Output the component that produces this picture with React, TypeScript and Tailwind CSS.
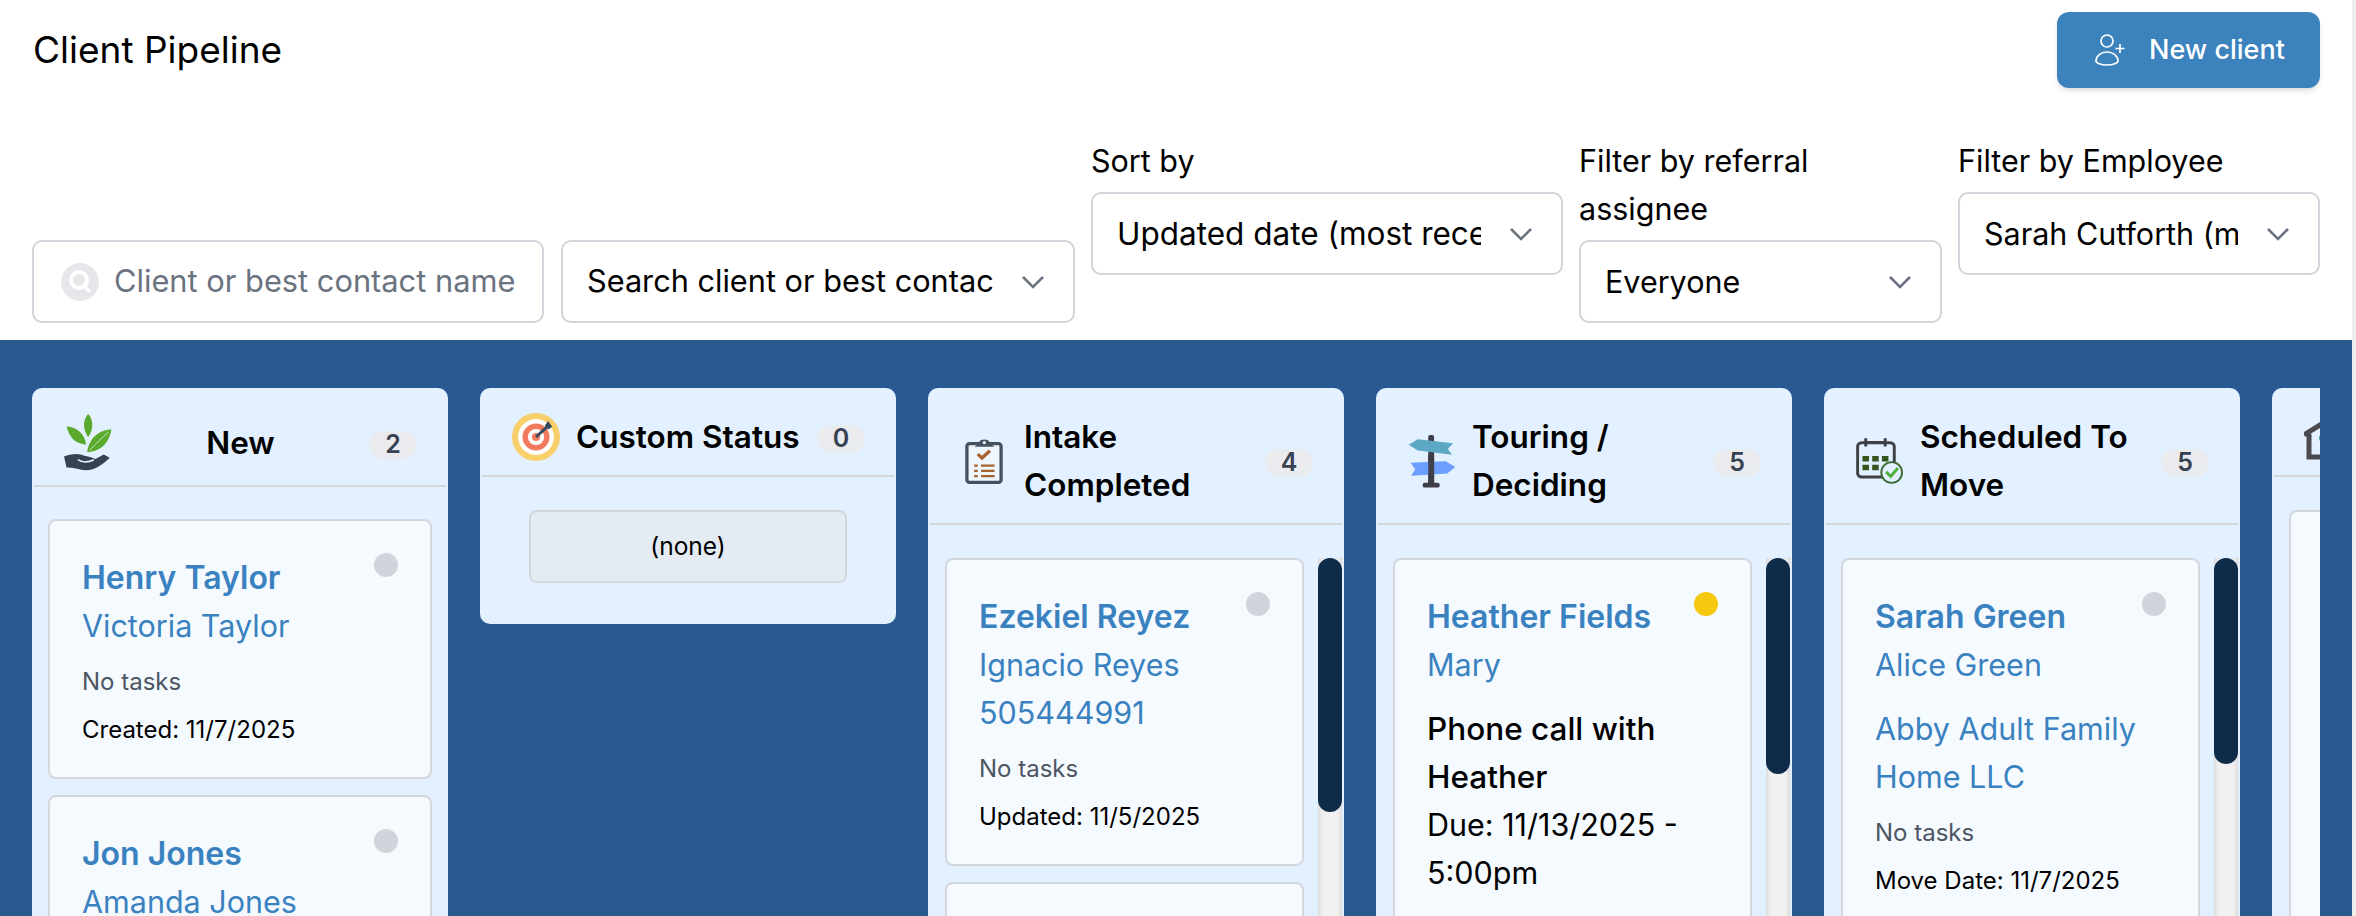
import React from "react";

function Chevron() {
  return (
    <svg viewBox="0 0 24 14" className="w-[24px] h-[14px] shrink-0" fill="none" stroke="#6b7280" strokeWidth="2.6">
      <path d="M2 2l10 10L22 2" />
    </svg>
  );
}

function Select({ text, w, size = "text-[30.5px]" }: { text: string; w: string; size?: string }) {
  return (
    <div className={`${w} h-[83px] flex items-center bg-white border-2 border-[#d1d5db] rounded-[10px] pl-[24px] pr-[28px] gap-[28px]`}>
      <div className={`flex-1 overflow-hidden whitespace-nowrap ${size} text-black`}>{text}</div>
      <Chevron />
    </div>
  );
}

function PlantIcon() {
  return (
    <svg viewBox="70 50 145 172" className="w-[48px] h-[57px] shrink-0">
      <path d="M143 50C128 65 125 95 143 120C161 95 158 65 143 50Z" fill="#5aab2d" />
      <path d="M78 88C110 90 132 110 137 142C105 142 85 120 78 88Z" fill="#5aab2d" />
      <path d="M213 97C175 97 145 125 140 165C180 165 208 135 213 97Z" fill="#5aab2d" />
      <path d="M148 160C165 140 185 122 205 104" stroke="#c8e6b5" strokeWidth="3" fill="none" />
      <path d="M70 178C85 172 105 168 120 172C135 178 150 178 165 186L190 172L208 182C190 200 165 220 135 220C115 220 100 210 78 212Z" fill="#374151" />
      <path d="M112 188C125 198 145 196 160 188" stroke="#e2f0ff" strokeWidth="5" fill="none" />
    </svg>
  );
}

function TargetIcon() {
  return (
    <svg viewBox="49 51 142 142" className="w-[48px] h-[48px] shrink-0">
      <circle cx="120" cy="122" r="71" fill="#f9cf6c" />
      <circle cx="120" cy="122" r="53" fill="#ffffff" />
      <circle cx="120" cy="122" r="40" fill="#f17a5e" />
      <circle cx="120" cy="122" r="24" fill="#ffffff" />
      <circle cx="120" cy="122" r="12" fill="#f17a5e" />
      <path d="M120 122L155 90" stroke="#34495e" strokeWidth="9" />
      <path d="M146 88L156 75L168 92L156 100Z" fill="#34495e" />
    </svg>
  );
}

function ClipboardIcon() {
  return (
    <svg viewBox="41 46 146 146" className="w-[48px] h-[48px] shrink-0">
      <rect x="62" y="66" width="104" height="118" rx="8" fill="#eef5fc" stroke="#44515f" strokeWidth="10" />
      <path d="M86 76L98 64C100 50 130 50 132 64L146 76Z" fill="#44515f" />
      <circle cx="115" cy="63" r="5" fill="#eef5fc" />
      <path d="M95 98L108 110L132 88" fill="none" stroke="#a5622f" strokeWidth="10" />
      <path d="M84 133H95M105 133H146M84 149H95M105 149H146M84 165H95M105 165H146" stroke="#a5622f" strokeWidth="7" />
    </svg>
  );
}

function SignIcon() {
  return (
    <svg viewBox="50 38 147 163" className="w-[48px] h-[54px] shrink-0">
      <rect x="112" y="40" width="18" height="150" rx="6" fill="#3d3d45" />
      <rect x="95" y="186" width="52" height="15" rx="6" fill="#3d3d45" />
      <path d="M52 70L80 53L188 65L172 83L185 100L80 87Z" fill="#5ba9c4" />
      <path d="M58 125L165 120L195 138L170 158L60 165L72 145Z" fill="#6b9eff" />
      <rect x="112" y="100" width="18" height="90" fill="#3d3d45" opacity="0.95" />
    </svg>
  );
}

function CalendarIcon() {
  return (
    <svg viewBox="45 48 148 145" className="w-[48px] h-[48px] shrink-0">
      <rect x="50" y="64" width="113" height="106" rx="12" fill="none" stroke="#3f3f46" strokeWidth="9" />
      <path d="M75 50V76M135 50V76M78 63H132" stroke="#3f3f46" strokeWidth="9" />
      <path d="M65 105H85V122H65ZM95 105H115V122H95ZM125 105H145V122H125ZM65 132H85V149H65ZM95 132H115V149H95Z" fill="#35561f" />
      <circle cx="155" cy="156" r="32" fill="#e2f0ff" stroke="#3d6b35" strokeWidth="6" />
      <path d="M138 154L152 168L174 142" fill="none" stroke="#4caf3a" strokeWidth="9" />
    </svg>
  );
}

function HouseIcon() {
  return (
    <svg viewBox="0 -5 48 48" className="w-[48px] h-[48px] shrink-0" fill="none" stroke="#4b4b4f" strokeWidth="5">
      <path d="M0 17L24 2L48 17" />
      <path d="M5 16V39H20" />
      <circle cx="19" cy="20" r="4" fill="#3fa796" stroke="none" />
    </svg>
  );
}

function Badge({ n, cls = "" }: { n: number; cls?: string }) {
  return (
    <div className={`w-[48px] h-[28px] shrink-0 rounded-full bg-[#e9ebef] flex items-center justify-center text-[25px] font-semibold text-[#374151] ${cls}`}>
      {n}
    </div>
  );
}

function Card({
  name,
  lines,
  task,
  due,
  foot,
  dot = "bg-[#d1d5db]",
  extra,
}: {
  name: string;
  lines: string[];
  task?: string;
  due?: string[];
  foot?: string;
  dot?: string;
  extra?: string[];
}) {
  return (
    <div className="relative shrink-0 bg-[#f5faff] border-2 border-[#d4d7dc] rounded-[8px] px-[32px] pt-[33px] pb-[27px]">
      <div className={`absolute top-[32px] right-[32px] w-[24px] h-[24px] rounded-full ${dot}`} />
      <div className="text-[32px] leading-[48px] font-semibold text-[#3a82bf]">{name}</div>
      {lines.map((l) => (
        <div key={l} className="text-[30.5px] leading-[48px] text-[#3a82bf]">{l}</div>
      ))}
      {extra && (
        <div className="mt-[16px]">
          {extra.map((l) => (
            <div key={l} className="text-[30.5px] leading-[48px] text-[#3a82bf]">{l}</div>
          ))}
        </div>
      )}
      {due && (
        <div className="mt-[16px] text-[30.5px] leading-[48px] text-black">
          <div className="text-[31.5px] font-medium">{due[0]}</div>
          <div className="text-[31.5px] font-medium">{due[1]}</div>
          <div>{due[2]}</div>
          <div>{due[3]}</div>
        </div>
      )}
      {task && <div className="mt-[12px] text-[24px] leading-[40px] text-[#4b5563]">{task}</div>}
      {foot && <div className="mt-[8px] text-[24px] leading-[40px] text-black">{foot}</div>}
    </div>
  );
}

function Column({
  icon,
  title,
  count,
  thumb,
  children,
  center,
}: {
  icon: React.ReactNode;
  title?: React.ReactNode;
  count?: number;
  thumb?: string;
  children: React.ReactNode;
  center?: boolean;
}) {
  return (
    <div className="w-[416px] shrink-0 self-start bg-[#e2f0ff] border-2 border-[#e2f0ff] rounded-[10px] flex flex-col">
      <div className={`flex items-center gap-[16px] pl-[30px] pr-[29px] border-b-2 border-[#d4d7dc] ${center ? "pt-[10px] h-[97px]" : "pt-[23px] pb-[14px]"}`}>
        {icon}
        {title && (
          <div className={`flex-1 whitespace-nowrap text-[31.5px] leading-[48px] font-semibold text-black ${center ? "text-center" : ""}`}>{title}</div>
        )}
        {count !== undefined && <Badge n={count} cls="mt-[4px]" />}
      </div>
      {thumb ? (
        <div className="flex mt-[33px] pl-[15px] gap-[14px] h-[600px]">
          <div className="flex-1 flex flex-col gap-[16px]">{children}</div>
          <div className="w-[24px] bg-[#f1f1f1] shadow-[inset_3px_0_4px_-2px_#cfcfcf,inset_-3px_0_4px_-2px_#cfcfcf]">
            <div className={`${thumb} w-full rounded-full bg-[#0f2b4a]`} />
          </div>
        </div>
      ) : (
        <div className={`flex flex-col gap-[16px] px-[14px] ${center ? "pt-[32px]" : "pt-[33px]"}`}>{children}</div>
      )}
    </div>
  );
}

export default function App() {
  return (
    <div className="flex w-[2356px] h-[916px] overflow-hidden bg-white font-[Inter,sans-serif]">
      <div className="w-[2352px] shrink-0 flex flex-col">
        <div className="flex justify-between items-start pl-[33px] pr-[32px] pt-[12px] h-[138px]">
          <div className="text-[37px] leading-[76px] text-black">Client Pipeline</div>
          <button className="w-[263px] h-[76px] rounded-[12px] bg-[#3c82bd] shadow-md flex items-center pl-[38px] gap-[22px] text-white text-[27px] font-medium">
            <svg viewBox="0 0 32 32" className="w-[32px] h-[32px]" fill="none" stroke="#fff" strokeWidth="1.7">
              <circle cx="12" cy="7" r="6" />
              <path d="M1 27c0-5 5-9 11-9s11 4 11 9c0 2-5 4-11 4S1 29 1 27Z" />
              <path d="M25 10v9M20.500 14.500h9" />
            </svg>
            New client
          </button>
        </div>
        <div className="flex items-start gap-[16px] pl-[32px] pr-[32px] h-[202px]">
          <div className="self-end mb-[17px] mr-[1px] w-[512px] h-[83px] flex items-center bg-white border-2 border-[#d1d5db] rounded-[10px] pl-[27px] gap-[15px]">
            <svg viewBox="0 0 38 38" className="w-[38px] h-[38px] shrink-0">
              <circle cx="19" cy="19" r="19" fill="#e5e7eb" />
              <circle cx="18" cy="17" r="8" fill="none" stroke="#fff" strokeWidth="4" />
              <path d="M23 23l6 6" stroke="#fff" strokeWidth="3.500" />
            </svg>
            <span className="text-[30.8px] text-[#6b7280] whitespace-nowrap">Client or best contact name</span>
          </div>
          <div className="self-end mb-[17px]">
            <Select w="w-[514px]" text="Search client or best contact" size="text-[30.7px]" />
          </div>
          <div className="w-[472px]">
            <div className="-mt-[1px] text-[30.5px] leading-[48px] text-black mb-[7px]">Sort by</div>
            <Select w="w-full" text="Updated date (most recent first)" size="text-[31.5px]" />
          </div>
          <div className="w-[363px]">
            <div className="-mt-[1px] text-[30.5px] leading-[48px] text-black mb-[7px]">Filter by referral<br />assignee</div>
            <Select w="w-full" text="Everyone" />
          </div>
          <div className="w-[362px]">
            <div className="-mt-[1px] text-[30.5px] leading-[48px] text-black mb-[7px]">Filter by Employee</div>
            <Select w="w-full" text="Sarah Cutforth (me)" />
          </div>
        </div>
        <div className="flex-1 min-h-0 bg-[#285a8f] px-[32px] pt-[48px] overflow-hidden">
          <div className="flex items-start gap-[32px] overflow-hidden h-full">
            <Column center icon={<PlantIcon />} title="New" count={2}>
              <Card name="Henry Taylor" lines={["Victoria Taylor"]} task="No tasks" foot="Created: 11/7/2025" />
              <Card name="Jon Jones" lines={["Amanda Jones"]} task="No tasks" foot="Created: 11/7/2025" />
            </Column>
            <Column icon={<TargetIcon />} title="Custom Status" count={0}>
              <div className="mx-[33px] h-[73px] mb-[39px] bg-[#e5ebf3] border-2 border-[#d4d7dc] rounded-[8px] flex items-center justify-center text-[24.500px] text-black">(none)</div>
            </Column>
            <Column icon={<ClipboardIcon />} title={<>Intake<br />Completed</>} count={4} thumb="h-[254px]">
              <Card name="Ezekiel Reyez" lines={["Ignacio Reyes", "505444991"]} task="No tasks" foot="Updated: 11/5/2025" />
              <div className="h-[120px] shrink-0 bg-[#f5faff] border-2 border-[#d4d7dc] rounded-[8px]" />
            </Column>
            <Column icon={<SignIcon />} title={<>Touring /<br />Deciding</>} count={5} thumb="h-[216px]">
              <Card name="Heather Fields" lines={["Mary"]} due={["Phone call with", "Heather", "Due: 11/13/2025 -", "5:00pm"]} dot="bg-[#f5c90f]" />
            </Column>
            <Column icon={<CalendarIcon />} title={<>Scheduled To<br />Move</>} count={5} thumb="h-[206px]">
              <Card name="Sarah Green" lines={["Alice Green"]} extra={["Abby Adult Family", "Home LLC"]} task="No tasks" foot="Move Date: 11/7/2025" />
            </Column>
            <Column icon={<HouseIcon />}>
              <div className="h-[500px] ml-[1px] bg-[#f5faff] border-2 border-[#d4d7dc] rounded-[8px]" />
            </Column>
          </div>
        </div>
      </div>
      <div className="flex-1 bg-[#efefef]" />
    </div>
  );
}
